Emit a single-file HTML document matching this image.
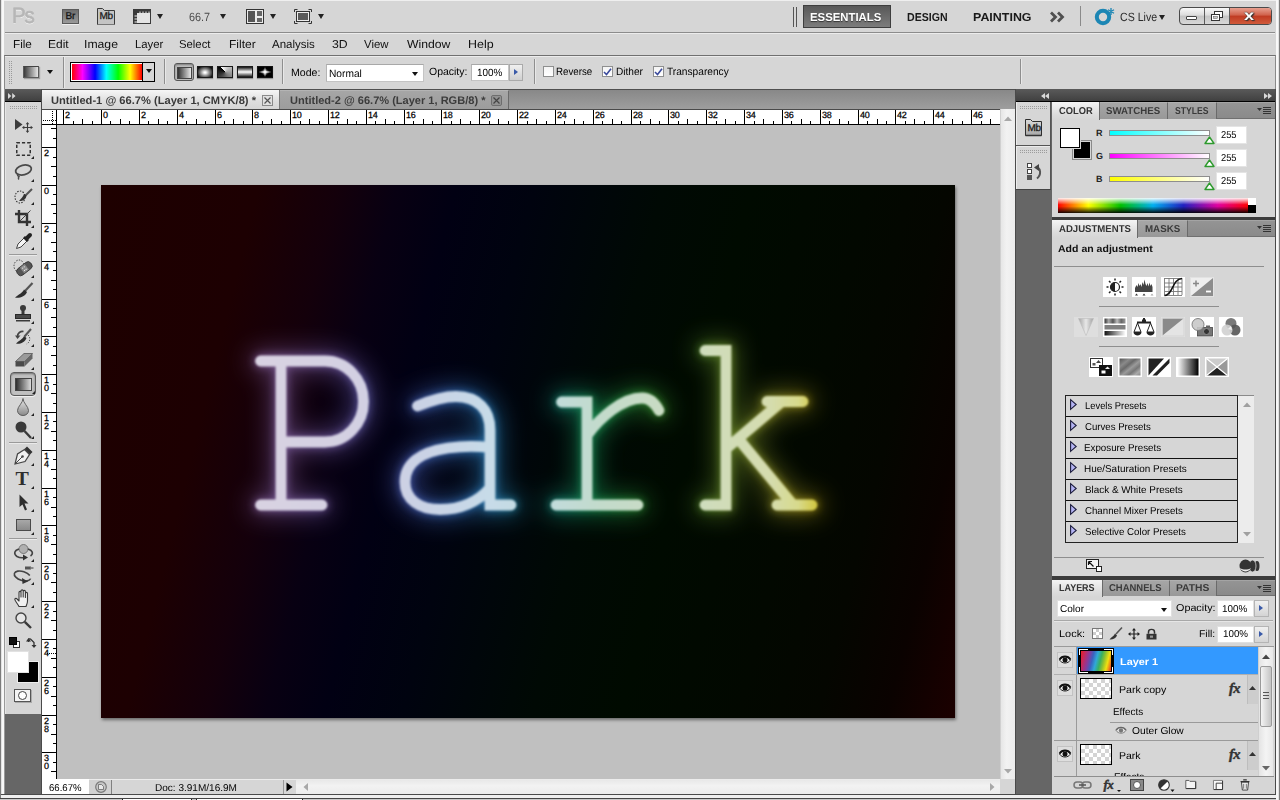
<!DOCTYPE html>
<html>
<head>
<meta charset="utf-8">
<title>Ps</title>
<style>
*{box-sizing:border-box;margin:0;padding:0}
html,body{width:1280px;height:800px;overflow:hidden;background:#d6d6d6;font-family:"Liberation Sans",sans-serif;font-size:11px;color:#000;text-rendering:geometricPrecision}
.a{position:absolute}
.t{position:absolute;white-space:nowrap;line-height:1;transform-origin:0 0}
svg{position:absolute;overflow:visible}
.menu{font-size:11.5px;top:40px;color:#111}
.ws{font-size:11.5px;font-weight:bold;top:13px;color:#1a1a1a}
.lbl{font-size:10px;color:#000}
.lb2{font-size:10.5px}
.inp{background:#fff;border:1px solid #c4c4c4;border-top-color:#a8a8a8;border-left-color:#b4b4b4}
.dd{width:0;height:0;border-left:3.5px solid transparent;border-right:3.5px solid transparent;border-top:5px solid #222}
.dds{width:0;height:0;border-left:3px solid transparent;border-right:3px solid transparent;border-top:4px solid #111}
.sep{width:1px;background:#8e8e8e;box-shadow:1px 0 0 #e8e8e8}
.cb{width:11px;height:11px;background:linear-gradient(#f4f4f4,#fff);border:1px solid #8e8f8f}
.tab{font-size:11px;font-weight:bold}
.ptab{font-size:10px;font-weight:bold;color:#3a3a3a}
.tri{width:0;height:0;border-left:3px solid transparent;border-bottom:3px solid #222}
.rl{font-size:9px;color:#000;letter-spacing:-0.2px;-webkit-text-stroke:0.25px #000}
.ck{width:32px;height:21px;border:1px solid #000;background-color:#fff;background-image:linear-gradient(45deg,#d4d4d4 25%,transparent 25%,transparent 75%,#d4d4d4 75%),linear-gradient(45deg,#d4d4d4 25%,transparent 25%,transparent 75%,#d4d4d4 75%);background-size:8px 8px;background-position:0 0,4px 4px}
.fx{font-family:"Liberation Serif",serif;font-style:italic;font-weight:bold;font-size:14.5px;color:#333;letter-spacing:-0.5px;text-shadow:0 1px 0 #f4f4f4;-webkit-text-stroke:0.5px #333}
.pl{}
</style>
</head>
<body>
<!-- APPBAR -->
<div class="a" style="left:0;top:0;width:1280px;height:1px;background:#efefef"></div>
<div class="a" style="left:5px;top:32px;width:1270px;height:1px;background:#8c8c8c"></div>
<div class="a" style="left:5px;top:33px;width:1270px;height:1px;background:#ececec"></div>
<div class="a" style="left:0;top:0;width:1px;height:800px;background:#7c7c7c"></div>
<div class="a" style="left:1px;top:0;width:1px;height:800px;background:#e2e2e2"></div>
<div class="a" style="left:2px;top:0;width:2px;height:800px;background:#f8f8f8"></div>
<!-- Ps logo -->
<div class="t" style="left:12px;top:5px;font-size:22px;color:#b6b6b6;letter-spacing:-1.2px;text-shadow:0 1px 0 #f6f6f6;-webkit-text-stroke:0.7px #b6b6b6;transform:scaleX(0.93)">Ps</div>
<!-- Br -->
<div class="a" style="left:62px;top:9px;width:17px;height:15px;background:linear-gradient(#6e6e6e,#9a9a9a);border:1px solid #5a5a5a;box-shadow:0 1px 0 #efefef"></div>
<div class="t" style="left:65.5px;top:12px;font-size:10px;color:#161616;letter-spacing:-0.2px;-webkit-text-stroke:0.3px #161616">Br</div>
<!-- Mb -->
<svg style="left:97px;top:8px" width="19" height="17" viewBox="0 0 19 17"><path d="M0.5 16.5V0.5H5.5L7.5 2.5H17.5V16.5Z" fill="#c4c4c4" stroke="#3a3a3a"/><path d="M0.5 16.5H17.5" stroke="#777"/></svg>
<div class="t" style="left:99.5px;top:12px;font-size:10px;color:#1a1a1a;letter-spacing:-0.3px;-webkit-text-stroke:0.3px #1a1a1a">Mb</div>
<!-- extras -->
<svg style="left:133px;top:9px" width="18" height="15" viewBox="0 0 18 15"><rect x="0.5" y="0.5" width="17" height="14" fill="#e4e4e4" stroke="#3a3a3a"/><rect x="0" y="0" width="18" height="4" fill="#3a3a3a"/><rect x="0" y="0" width="4" height="15" fill="#3a3a3a"/><path d="M7 2.5V4M10 2.5V4M13 2.5V4M16 2.5V4M1.5 7H4M1.5 10H4M1.5 13H4" stroke="#eee" stroke-width="1"/></svg>
<div class="a dd" style="left:157px;top:14px"></div>
<div class="t" style="left:189.42px;top:11px;font-size:12px;color:#4a4a4a;transform:scaleX(0.9050)">66.7</div>
<div class="a dd" style="left:220px;top:14px"></div>
<!-- arrange -->
<svg style="left:246px;top:9px" width="18" height="15" viewBox="0 0 18 15"><rect x="0.5" y="0.5" width="17" height="14" fill="#ececec" stroke="#333"/><rect x="2" y="2" width="7" height="11" fill="#555"/><rect x="11" y="2" width="5" height="5" fill="#666"/><rect x="11" y="9" width="5" height="4" fill="#666"/></svg>
<div class="a dd" style="left:270px;top:14px"></div>
<!-- screen mode -->
<svg style="left:294px;top:9px" width="18" height="15" viewBox="0 0 18 15"><path d="M0.5 3V0.5H3.5M14.5 0.5H17.5V3M17.5 12V14.5H14.5M3.5 14.5H0.5V12" fill="none" stroke="#333"/><rect x="2.5" y="2.5" width="13" height="10" fill="#ececec" stroke="#333"/><rect x="4" y="4" width="10" height="7" fill="#5a5a5a"/></svg>
<div class="a dd" style="left:318px;top:14px"></div>

<!-- workspace switcher -->
<div class="a" style="left:793px;top:7px;width:1px;height:20px;background:#555"></div>
<div class="a" style="left:796px;top:7px;width:1px;height:20px;background:#555"></div>
<div class="a" style="left:803px;top:5px;width:88px;height:23px;background:linear-gradient(#585858,#7c7c7c);border:1px solid #3e3e3e"></div>
<div class="t ws" style="left:809.69px;color:#fff;text-shadow:0 1px 1px #333;transform:scaleX(0.9864)">ESSENTIALS</div>
<div class="t ws" style="left:907.35px;transform:scaleX(0.9188)">DESIGN</div>
<div class="t ws" style="left:972.65px;transform:scaleX(1.0824)">PAINTING</div>
<svg style="left:1050px;top:12px" width="15" height="10" viewBox="0 0 15 10"><path d="M1 0.5L5.5 5L1 9.5M8 0.5L12.5 5L8 9.5" fill="none" stroke="#505050" stroke-width="2.800"/></svg>
<div class="a" style="left:1080px;top:6px;width:1px;height:20px;background:#8a8a8a"></div>
<!-- CS Live -->
<svg style="left:1094px;top:7px" width="22" height="19" viewBox="0 0 22 19"><circle cx="9" cy="10" r="6.2" fill="none" stroke="#1c86b4" stroke-width="4"/><path d="M17 1V8M14 2.8L20 6.2M20 2.8L14 6.2" stroke="#1c86b4" stroke-width="1.3"/></svg>
<div class="t" style="left:1119.90px;top:11px;font-size:12px;color:#2a2a2a;transform:scaleX(0.8818)">CS Live</div>
<div class="a dd" style="left:1159px;top:15px"></div>
<!-- window buttons -->
<div class="a" style="left:1179px;top:7px;width:93px;height:18px;border:1px solid #4a4a4a;border-radius:4px;background:linear-gradient(#f8f8f8,#dcdcdc 45%,#c4c4c4 50%,#d8d8d8);overflow:hidden">
 <div class="a" style="left:24px;top:0;width:1px;height:16px;background:#5a5a5a"></div>
 <div class="a" style="left:49px;top:0;width:1px;height:16px;background:#5a5a5a"></div>
 <div class="a" style="left:50px;top:0;width:42px;height:16px;background:linear-gradient(#e8a090,#d0604a 45%,#c03a22 50%,#d05a3a)"></div>
</div>
<div class="a" style="left:1186px;top:16px;width:11px;height:4px;background:#fff;border:1px solid #444;border-radius:1px"></div>
<svg style="left:1210px;top:10px" width="14" height="12" viewBox="0 0 14 12"><rect x="4.5" y="1.5" width="8" height="6" fill="#fff" stroke="#333"/><rect x="1.5" y="4.5" width="8" height="6" fill="#fff" stroke="#333"/><rect x="3.5" y="6.5" width="4" height="2" fill="#ccc" stroke="#555" stroke-width="0.5"/></svg>
<div class="t" style="left:1244px;top:8px;font-size:14px;font-weight:bold;color:#fff;text-shadow:0 0 1px #333,0 0 1px #333,1px 1px 1px #333;transform:scaleX(1.3)">x</div>

<!-- MENUS -->
<div class="t menu" style="left:13.00px;transform:scaleX(1.0194)">File</div>
<div class="t menu" style="left:47.50px;transform:scaleX(1.0409)">Edit</div>
<div class="t menu" style="left:83.50px;transform:scaleX(1.0611)">Image</div>
<div class="t menu" style="left:134.50px;transform:scaleX(0.9863)">Layer</div>
<div class="t menu" style="left:179.00px;transform:scaleX(0.9835)">Select</div>
<div class="t menu" style="left:228.50px;transform:scaleX(1.0470)">Filter</div>
<div class="t menu" style="left:272.00px;transform:scaleX(1.0008)">Analysis</div>
<div class="t menu" style="left:332.06px;transform:scaleX(1.0656)">3D</div>
<div class="t menu" style="left:363.81px;transform:scaleX(0.9909)">View</div>
<div class="t menu" style="left:406.89px;transform:scaleX(1.0602)">Window</div>
<div class="t menu" style="left:468.00px;transform:scaleX(1.0818)">Help</div>

<!-- OPTIONS BAR -->
<div class="a" style="left:4px;top:55px;width:1272px;height:34px;background:#d6d6d6;border-top:1px solid #707070;border-left:1px solid #8a8a8a;border-right:1px solid #8a8a8a"></div>
<div class="a" style="left:5px;top:56px;width:1270px;height:1px;background:#ececec"></div>
<!-- gripper -->
<div class="a" style="left:9px;top:61px;width:3px;height:24px;background-image:radial-gradient(circle at 0.5px 0.5px,#9a9a9a 0.6px,transparent 0.7px);background-size:2px 2px"></div>
<!-- gradient tool preset -->
<div class="a" style="left:23px;top:66px;width:16px;height:12px;background:linear-gradient(90deg,#3a3a3a,#e4e4e4);border:1px solid #5a5a5a;border-top-color:#444;box-shadow:1px 1px 1px rgba(0,0,0,.25)"></div>
<div class="a dds" style="left:47px;top:70px"></div>
<div class="a" style="left:63px;top:57px;width:1px;height:31px;background:#8e8e8e;box-shadow:1px 0 0 #e8e8e8"></div>
<!-- gradient picker -->
<div class="a" style="left:70px;top:62px;width:85px;height:20px;border:1px solid #000;background:#d6d6d6"></div>
<div class="a" style="left:71px;top:63px;width:72px;height:18px;background:#fff;border-right:1px solid #000"></div><div class="a" style="left:72px;top:64px;width:70px;height:16px;background:linear-gradient(90deg,#ff0000 0%,#ff00ff 15%,#0000ff 33%,#00ffff 49%,#00ff00 66%,#ffff00 83%,#ff0000 100%)"></div>
<div class="a dds" style="left:146px;top:69px"></div>
<div class="a sep" style="left:164px;top:59px;height:25px"></div>
<!-- gradient type buttons -->
<div class="a" style="left:174px;top:63px;width:20px;height:18px;border:1px solid #555;border-radius:3px;background:#bdbdbd;box-shadow:inset 0 1px 2px rgba(0,0,0,.35)"></div>
<div class="a" style="left:177px;top:67px;width:15px;height:12px;background:linear-gradient(90deg,#333,#e8e8e8);border:1px solid #444"></div>
<div class="a" style="left:197px;top:66px;width:16px;height:12px;background:radial-gradient(ellipse at 50% 55%,#fff 8%,#888 45%,#111 85%);border:1px solid #1a1a1a;box-shadow:0 1px 1px rgba(0,0,0,.3)"></div>
<div class="a" style="left:216.500px;top:66px;width:16px;height:12px;background:conic-gradient(from 315deg,#fff,#000);border:1px solid #1a1a1a;box-shadow:0 1px 1px rgba(0,0,0,.3)"></div>
<div class="a" style="left:237px;top:66px;width:16px;height:12px;background:linear-gradient(#111,#fff 50%,#111);border:1px solid #1a1a1a;box-shadow:0 1px 1px rgba(0,0,0,.3)"></div>
<div class="a" style="left:257px;top:66px;width:16px;height:12px;background:radial-gradient(ellipse 50% 14% at 50% 50%,#fff 10%,rgba(255,255,255,0) 100%),radial-gradient(ellipse 14% 50% at 50% 50%,#fff 10%,rgba(255,255,255,0) 100%),radial-gradient(ellipse at center,#aaa 0%,#000 45%);border:1px solid #111;box-shadow:0 1px 1px rgba(0,0,0,.3)"></div>
<div class="a sep" style="left:282px;top:59px;height:25px"></div>
<div class="t lbl lb2" style="left:291.41px;top:68.3px;transform:scaleX(1.0071)">Mode:</div>
<div class="a inp" style="left:326px;top:64px;width:98px;height:18px"></div>
<div class="t lbl lb2" style="left:328.55px;top:69px;transform:scaleX(0.9699)">Normal</div>
<div class="a dds" style="left:412px;top:72px"></div>
<div class="t lbl lb2" style="left:429.36px;top:67.3px;transform:scaleX(0.9980)">Opacity:</div>
<div class="a inp" style="left:471px;top:64px;width:38px;height:17px"></div>
<div class="t lbl lb2" style="left:476.72px;top:68px;transform:scaleX(0.9421)">100%</div>
<div class="a" style="left:509px;top:64px;width:14px;height:17px;border:1px solid #aaa;background:linear-gradient(#f0f0f0,#d0d0d0)"></div>
<div class="a" style="left:514px;top:69px;width:0;height:0;border-top:3.5px solid transparent;border-bottom:3.5px solid transparent;border-left:4px solid #3a5aa8"></div>
<div class="a sep" style="left:534px;top:59px;height:25px"></div>
<div class="a cb" style="left:543px;top:66px"></div>
<div class="t lbl lb2" style="left:556.00px;top:67.2px;transform:scaleX(0.9276)">Reverse</div>
<div class="a cb" style="left:602px;top:66px"></div>
<svg style="left:603px;top:68px" width="9" height="8" viewBox="0 0 9 8"><path d="M1 4L3.500 6.500L8 0.800" fill="none" stroke="#3a4a9c" stroke-width="1.600"/></svg>
<div class="t lbl lb2" style="left:615.50px;top:67.2px;transform:scaleX(0.9625)">Dither</div>
<div class="a cb" style="left:653px;top:66px"></div>
<svg style="left:654px;top:68px" width="9" height="8" viewBox="0 0 9 8"><path d="M1 4L3.500 6.500L8 0.800" fill="none" stroke="#3a4a9c" stroke-width="1.600"/></svg>
<div class="t lbl lb2" style="left:666.68px;top:67.2px;transform:scaleX(0.9678)">Transparency</div>
<div class="a sep" style="left:1020px;top:59px;height:25px"></div>
<!-- TOOLBOX -->
<div class="a" style="left:5px;top:89px;width:36px;height:13px;background:linear-gradient(#5a5a5a,#404040);border-bottom:1px solid #000"></div>
<svg style="left:8px;top:93px" width="7.500" height="6" viewBox="0 0 9 6" preserveAspectRatio="none"><path d="M0 0L4 3L0 6ZM5 0L9 3L5 6Z" fill="#d8d8d8"/></svg>
<div class="a" style="left:5px;top:102px;width:36px;height:612px;background:#d6d6d6;border-left:1px solid #e6e6e6"></div>
<div class="a" style="left:4px;top:89px;width:1px;height:705px;background:#9a9a9a"></div>
<div class="a" style="left:41px;top:89px;width:1px;height:705px;background:#4a4a4a"></div>
<div class="a" style="left:5px;top:714px;width:36px;height:80px;background:#666"></div>
<div class="a" style="left:10px;top:106px;width:28px;height:3px;background-image:radial-gradient(circle at 0.5px 0.5px,#9c9c9c 0.6px,transparent 0.7px);background-size:2px 2px"></div>
<div class="a" style="left:9px;top:254px;width:28px;height:1px;background:#9a9a9a;box-shadow:0 1px 0 #eaeaea"></div>
<div class="a" style="left:9px;top:442px;width:28px;height:1px;background:#9a9a9a;box-shadow:0 1px 0 #eaeaea"></div>
<div class="a" style="left:9px;top:538px;width:28px;height:1px;background:#9a9a9a;box-shadow:0 1px 0 #eaeaea"></div>
<!-- sub-tool triangles -->
<div class="a tri" style="left:31px;top:156px"></div>
<div class="a tri" style="left:31px;top:179px"></div>
<div class="a tri" style="left:31px;top:202px"></div>
<div class="a tri" style="left:31px;top:225px"></div>
<div class="a tri" style="left:31px;top:247px"></div>
<div class="a tri" style="left:31px;top:275px"></div>
<div class="a tri" style="left:31px;top:298px"></div>
<div class="a tri" style="left:31px;top:321px"></div>
<div class="a tri" style="left:31px;top:344px"></div>
<div class="a tri" style="left:31px;top:367px"></div>
<div class="a tri" style="left:31px;top:413px"></div>
<div class="a tri" style="left:31px;top:436px"></div>
<div class="a tri" style="left:31px;top:463px"></div>
<div class="a tri" style="left:31px;top:486px"></div>
<div class="a tri" style="left:31px;top:509px"></div>
<div class="a tri" style="left:31px;top:532px"></div>
<div class="a tri" style="left:31px;top:559px"></div>
<div class="a tri" style="left:31px;top:582px"></div>
<div class="a tri" style="left:31px;top:605px"></div>
<!-- move -->
<svg style="left:15px;top:119px" width="18" height="14" viewBox="0 0 18 14"><path d="M0 0V11L7.5 5.5Z" fill="#3c3c3c"/><path d="M12.500 4.500V12.500M8.500 8.500H16.500" stroke="#3c3c3c" stroke-width="1.100"/><path d="M12.500 3L14.300 5.300H10.700ZM12.500 14L14.300 11.700H10.700ZM7 8.500L9.300 6.700V10.300ZM18 8.500L15.700 6.700V10.300Z" fill="#3c3c3c"/></svg>
<!-- marquee -->
<svg style="left:16px;top:142px" width="15" height="14" viewBox="0 0 15 14"><rect x="0.75" y="0.75" width="13.500" height="12.500" fill="none" stroke="#333" stroke-width="1.5" stroke-dasharray="3.2 2"/></svg>
<!-- lasso -->
<svg style="left:14px;top:164px" width="18" height="16" viewBox="0 0 18 16"><ellipse cx="9.5" cy="6" rx="8" ry="4.800" transform="rotate(-14 9.500 6)" fill="none" stroke="#4a4a4a" stroke-width="1.8"/><path d="M4 9.500C2.500 11 4 12.500 5.500 12C4.500 13 4 14.500 5 15.500" fill="none" stroke="#4a4a4a" stroke-width="1.300"/></svg>
<!-- quick select -->
<svg style="left:14px;top:188px" width="19" height="16" viewBox="0 0 19 16"><ellipse cx="6" cy="9" rx="5" ry="6" fill="none" stroke="#333" stroke-width="1.100" stroke-dasharray="1.500 1.300"/><path d="M18 1L11 8" stroke="#555" stroke-width="2"/><path d="M5 13C8 13.500 12 11.500 12.500 7.500L10 6C9 9 7 10.500 5 13Z" fill="#333"/></svg>
<!-- crop -->
<svg style="left:15px;top:210px" width="16" height="16" viewBox="0 0 16 16"><path d="M4 0V12H16M0 4H12V16" fill="none" stroke="#333" stroke-width="2.400"/><path d="M15.500 0.500L5 11" stroke="#444" stroke-width="1"/></svg>
<!-- eyedropper -->
<svg style="left:16px;top:233px" width="16" height="16" viewBox="0 0 16 16"><path d="M0.500 15.500L2 11L8.500 4.500L11.500 7.500L5 14Z" fill="#f4f4f4" stroke="#444" stroke-width="1"/><path d="M8 4L12 8" stroke="#222" stroke-width="2.600"/><path d="M10.500 5.500L14 2" stroke="#222" stroke-width="4" stroke-linecap="round"/></svg>
<!-- healing brush -->
<svg style="left:13px;top:259px" width="20" height="18" viewBox="0 0 20 18"><ellipse cx="6" cy="7" rx="5" ry="6" fill="none" stroke="#444" stroke-width="1" stroke-dasharray="1.400 1.400"/><g transform="rotate(-38 11 10)"><rect x="3" y="6" width="17" height="8" rx="3.500" fill="#555" stroke="#333" stroke-width="0.800"/><rect x="8.500" y="6.500" width="6" height="7" fill="#8a8a8a"/><circle cx="10.500" cy="8.500" r="0.600" fill="#eee"/><circle cx="12.500" cy="8.500" r="0.600" fill="#eee"/><circle cx="10.500" cy="11.500" r="0.600" fill="#eee"/><circle cx="12.500" cy="11.500" r="0.600" fill="#eee"/></g></svg>
<!-- brush -->
<svg style="left:15px;top:282px" width="18" height="17" viewBox="0 0 18 17"><path d="M17.500 1L10 9" stroke="#555" stroke-width="2.200"/><path d="M0 15.500C4 16.500 10.500 14.500 12 10L9 7.500C7.500 11 3.500 12.500 0 15.500Z" fill="#2e2e2e"/></svg>
<!-- stamp -->
<svg style="left:15px;top:305px" width="16" height="17" viewBox="0 0 16 17"><circle cx="8" cy="3" r="3" fill="#3a3a3a"/><path d="M6.500 5H9.500V10H6.500Z" fill="#3a3a3a"/><rect x="0.500" y="9.500" width="15" height="4" fill="#4a4a4a" stroke="#2a2a2a"/><rect x="1" y="15" width="14" height="1.500" fill="#3a3a3a"/></svg>
<!-- history brush -->
<svg style="left:15px;top:328px" width="18" height="18" viewBox="0 0 18 18"><path d="M16 1L9.500 8.500" stroke="#555" stroke-width="2"/><path d="M1 15.500C4.500 16.500 10 14.500 11.500 10L9 8C7.500 11.500 4 12.500 1 15.500Z" fill="#2e2e2e"/><path d="M2.500 8.500C2.500 5 5.500 3 8.500 3.500" fill="none" stroke="#444" stroke-width="1.600"/><path d="M0 7.500H5.500L2.500 11Z" fill="#444"/><path d="M13 7C16 9.500 15 14.500 11.500 16" fill="none" stroke="#555" stroke-width="1" stroke-dasharray="1.300 1.300"/></svg>
<!-- eraser -->
<svg style="left:15px;top:352px" width="18" height="15" viewBox="0 0 18 15"><path d="M0.500 9.500L9 1.500H17.500L9.500 9.500Z" fill="#9a9a9a" stroke="#555" stroke-width="0.800"/><path d="M0.500 9.500H9.500V14.500H0.500Z" fill="#4a4a4a"/><path d="M9.500 9.500L17.500 1.500V6.500L9.500 14.500Z" fill="#666"/></svg>
<!-- gradient selected -->
<div class="a" style="left:10px;top:372px;width:26px;height:24px;border:1px solid #5a5a5a;border-radius:4px;background:#c0c0c0;box-shadow:inset 0 1px 2px rgba(0,0,0,.4),0 1px 0 #f0f0f0"></div>
<div class="a" style="left:15px;top:378px;width:17px;height:13px;background:linear-gradient(90deg,#2e2e2e,#dcdcdc);border:1px solid #444"></div>
<div class="a tri" style="left:32px;top:391px"></div>
<!-- blur -->
<svg style="left:17px;top:398px" width="12" height="18" viewBox="0 0 12 18"><defs><linearGradient id="gbl" x1="0" y1="0" x2="0" y2="1"><stop offset="0" stop-color="#e8e8e8"/><stop offset="1" stop-color="#8a8a8a"/></linearGradient></defs><path d="M6 0.500C6 5 0.500 8.500 0.500 12.500C0.500 15.500 3 17.500 6 17.500C9 17.500 11.500 15.500 11.500 12.500C11.500 8.500 6 5 6 0.500Z" fill="url(#gbl)" stroke="#555" stroke-width="0.900"/></svg>
<!-- dodge -->
<svg style="left:15px;top:421px" width="17" height="18" viewBox="0 0 17 18"><circle cx="6" cy="6" r="5.500" fill="#3a3a3a"/><path d="M9.500 10L16 17" stroke="#3a3a3a" stroke-width="2.400"/></svg>
<!-- pen -->
<svg style="left:14px;top:446px" width="19" height="19" viewBox="0 0 19 19"><path d="M1 18L3.500 8L10.500 3.500L15.500 8.500L11 15.500Z" fill="#f0f0f0" stroke="#444" stroke-width="1.200"/><path d="M1 18L8 11" stroke="#444" stroke-width="1"/><circle cx="8.500" cy="10.500" r="1.300" fill="#444"/><path d="M10.500 3L13 0.500L18.500 6L16 8.500Z" fill="#333"/></svg>
<!-- type -->
<div class="t" style="left:15.5px;top:468.5px;font-family:'Liberation Serif',serif;font-size:20px;font-weight:bold;color:#2e2e2e">T</div>
<!-- path select -->
<svg style="left:19px;top:494px" width="10" height="17" viewBox="0 0 10 17"><path d="M0.500 0.500V13L3.500 10.500L6 16.500L8 15.500L5.500 9.500H9.500Z" fill="#2e2e2e"/></svg>
<!-- rectangle -->
<div class="a" style="left:16px;top:519px;width:15px;height:12px;background:linear-gradient(#a8a8a8,#8a8a8a);border:1px solid #4a4a4a"></div>
<!-- 3d rotate -->
<svg style="left:13px;top:544px" width="21" height="17" viewBox="0 0 21 17"><circle cx="10.500" cy="5" r="4.500" fill="#b0b0b0" stroke="#666" stroke-width="0.800"/><path d="M6 5C1 6.500 0.500 10 4 12.500C6.500 14 9.500 14 12 13.500" fill="none" stroke="#444" stroke-width="1.600"/><path d="M15 5C20 6.500 20.500 10 17.500 12" fill="none" stroke="#444" stroke-width="1.600"/><path d="M10 10.500L15 13.500L10 16.500Z" fill="#333"/></svg>
<!-- 3d orbit -->
<svg style="left:13px;top:566px" width="21" height="18" viewBox="0 0 21 18"><rect x="12" y="0.500" width="6" height="3" fill="#555"/><rect x="17.500" y="1" width="3" height="2" fill="#888"/><ellipse cx="9.500" cy="10" rx="8.500" ry="4.500" transform="rotate(18 9.500 10)" fill="none" stroke="#444" stroke-width="1.600" stroke-dasharray="38 12"/><path d="M9 12L15 15.500L9.500 18Z" fill="#333"/></svg>
<!-- hand -->
<svg style="left:14px;top:589px" width="18" height="18" viewBox="0 0 18 18"><path d="M5 17.500C3.500 14.500 1 12 0.800 10.500C0.800 9 2.500 9 3.500 10.500L5 12V3.500C5 2 7 2 7 3.500V8V2C7 0.500 9.200 0.500 9.200 2V8V2.500C9.200 1 11.400 1 11.400 2.500V8.500V4.500C11.400 3 13.500 3 13.500 4.500V12C13.500 14.500 12.500 16 12 17.500Z" fill="#f0f0f0" stroke="#3a3a3a" stroke-width="1.100" stroke-linejoin="round"/></svg>
<!-- zoom -->
<svg style="left:15px;top:612px" width="17" height="17" viewBox="0 0 17 17"><circle cx="6" cy="6" r="5" fill="#e6e6e6" stroke="#444" stroke-width="1.400"/><path d="M9.800 9.800L16 16" stroke="#3a3a3a" stroke-width="2.400"/></svg>
<!-- default colors / swap -->
<div class="a" style="left:13px;top:641px;width:7px;height:7px;background:#fff;border:1px solid #333"></div>
<div class="a" style="left:9px;top:637px;width:8px;height:8px;background:#111;border:1px solid #000"></div>
<svg style="left:26px;top:637px" width="11" height="11" viewBox="0 0 11 11"><path d="M2.500 5V3C2.500 2 3.500 1.500 4.500 2L8 5.500V8.500" fill="none" stroke="#333" stroke-width="1.300"/><path d="M0 4.500H5L2.500 1Z" fill="#333"/><path d="M5.500 8H10.500L8 11Z" fill="#333"/></svg>
<!-- fg/bg -->
<div class="a" style="left:17px;top:661px;width:22px;height:22px;background:#000;border:1px solid #eee;outline:0"></div>
<div class="a" style="left:7px;top:651px;width:22px;height:22px;background:#fff;border:1px solid #e2e2e2"></div>
<!-- quick mask -->
<div class="a" style="left:14px;top:689px;width:17px;height:13px;background:#f4f4f4;border:1px solid #555;box-shadow:1px 1px 0 #aaa"></div>
<div class="a" style="left:18px;top:691px;width:9px;height:9px;border:1px solid #444;border-radius:50%;background:#fff"></div>
<!-- DOCUMENT -->
<div class="a" style="left:42px;top:89px;width:973px;height:20px;background:linear-gradient(#888888,#9e9e9e);border-top:1px solid #505050"></div>
<div class="a" style="left:42px;top:90px;width:238px;height:19px;background:linear-gradient(#f6f6f6,#dedede 60%,#d6d6d6);border-right:1px solid #7a7a7a"></div>
<div class="t tab" style="left:50.75px;top:95.8px;color:#3a3a3a;transform:scaleX(1.0113)" id="tab1">Untitled-1 @ 66.7% (Layer 1, CMYK/8) *</div>
<div class="a" style="left:262px;top:95px;width:11px;height:11px;border:1px solid #8a8a8a;background:#e0e0e0"></div>
<svg style="left:264px;top:97px" width="7" height="7" viewBox="0 0 7 7"><path d="M0.500 0.500L6.500 6.500M6.500 0.500L0.500 6.500" stroke="#555" stroke-width="1.200"/></svg>
<div class="a" style="left:280px;top:90px;width:229px;height:19px;background:linear-gradient(#a6a6a6,#9c9c9c);border-right:1px solid #6a6a6a;border-top:1px solid #b4b4b4"></div>
<div class="t tab" style="left:289.51px;top:95.8px;color:#3c3c3c;transform:scaleX(1.0036)" id="tab2">Untitled-2 @ 66.7% (Layer 1, RGB/8) *</div>
<div class="a" style="left:491px;top:95px;width:11px;height:11px;border:1px solid #6e6e6e;border-radius:2px;background:#929292"></div>
<svg style="left:493px;top:97px" width="7" height="7" viewBox="0 0 7 7"><path d="M0.500 0.500L6.500 6.500M6.500 0.500L0.500 6.500" stroke="#444" stroke-width="1.200"/></svg>
<div class="a" style="left:42px;top:109px;width:958px;height:1px;background:#4a4a4a"></div>
<div class="a" style="left:42px;top:110px;width:958px;height:14px;background:#fff"></div>
<div class="a" style="left:42px;top:124px;width:958px;height:1px;background:#000"></div>
<div class="a" style="left:42px;top:125px;width:14px;height:654px;background:#fff"></div>
<div class="a" style="left:56px;top:110px;width:1px;height:669px;background:#000"></div>
<div class="a" style="left:57px;top:125px;width:943px;height:654px;background:#c0c0c0"></div>
<svg style="left:0;top:0" width="1280" height="800" viewBox="0 0 1280 800" shape-rendering="crispEdges"><rect x="63" y="110" width="1" height="14" fill="#000"/><rect x="73" y="121" width="1" height="3" fill="#000"/><rect x="82" y="119" width="1" height="5" fill="#000"/><rect x="92" y="121" width="1" height="3" fill="#000"/><rect x="101" y="110" width="1" height="14" fill="#000"/><rect x="110" y="121" width="1" height="3" fill="#000"/><rect x="120" y="119" width="1" height="5" fill="#000"/><rect x="129" y="121" width="1" height="3" fill="#000"/><rect x="139" y="110" width="1" height="14" fill="#000"/><rect x="148" y="121" width="1" height="3" fill="#000"/><rect x="158" y="119" width="1" height="5" fill="#000"/><rect x="167" y="121" width="1" height="3" fill="#000"/><rect x="177" y="110" width="1" height="14" fill="#000"/><rect x="186" y="121" width="1" height="3" fill="#000"/><rect x="196" y="119" width="1" height="5" fill="#000"/><rect x="205" y="121" width="1" height="3" fill="#000"/><rect x="215" y="110" width="1" height="14" fill="#000"/><rect x="224" y="121" width="1" height="3" fill="#000"/><rect x="233" y="119" width="1" height="5" fill="#000"/><rect x="243" y="121" width="1" height="3" fill="#000"/><rect x="252" y="110" width="1" height="14" fill="#000"/><rect x="262" y="121" width="1" height="3" fill="#000"/><rect x="271" y="119" width="1" height="5" fill="#000"/><rect x="281" y="121" width="1" height="3" fill="#000"/><rect x="290" y="110" width="1" height="14" fill="#000"/><rect x="300" y="121" width="1" height="3" fill="#000"/><rect x="309" y="119" width="1" height="5" fill="#000"/><rect x="319" y="121" width="1" height="3" fill="#000"/><rect x="328" y="110" width="1" height="14" fill="#000"/><rect x="337" y="121" width="1" height="3" fill="#000"/><rect x="347" y="119" width="1" height="5" fill="#000"/><rect x="356" y="121" width="1" height="3" fill="#000"/><rect x="366" y="110" width="1" height="14" fill="#000"/><rect x="375" y="121" width="1" height="3" fill="#000"/><rect x="385" y="119" width="1" height="5" fill="#000"/><rect x="394" y="121" width="1" height="3" fill="#000"/><rect x="404" y="110" width="1" height="14" fill="#000"/><rect x="413" y="121" width="1" height="3" fill="#000"/><rect x="423" y="119" width="1" height="5" fill="#000"/><rect x="432" y="121" width="1" height="3" fill="#000"/><rect x="441" y="110" width="1" height="14" fill="#000"/><rect x="451" y="121" width="1" height="3" fill="#000"/><rect x="460" y="119" width="1" height="5" fill="#000"/><rect x="470" y="121" width="1" height="3" fill="#000"/><rect x="479" y="110" width="1" height="14" fill="#000"/><rect x="489" y="121" width="1" height="3" fill="#000"/><rect x="498" y="119" width="1" height="5" fill="#000"/><rect x="508" y="121" width="1" height="3" fill="#000"/><rect x="517" y="110" width="1" height="14" fill="#000"/><rect x="527" y="121" width="1" height="3" fill="#000"/><rect x="536" y="119" width="1" height="5" fill="#000"/><rect x="546" y="121" width="1" height="3" fill="#000"/><rect x="555" y="110" width="1" height="14" fill="#000"/><rect x="564" y="121" width="1" height="3" fill="#000"/><rect x="574" y="119" width="1" height="5" fill="#000"/><rect x="583" y="121" width="1" height="3" fill="#000"/><rect x="593" y="110" width="1" height="14" fill="#000"/><rect x="602" y="121" width="1" height="3" fill="#000"/><rect x="612" y="119" width="1" height="5" fill="#000"/><rect x="621" y="121" width="1" height="3" fill="#000"/><rect x="631" y="110" width="1" height="14" fill="#000"/><rect x="640" y="121" width="1" height="3" fill="#000"/><rect x="650" y="119" width="1" height="5" fill="#000"/><rect x="659" y="121" width="1" height="3" fill="#000"/><rect x="668" y="110" width="1" height="14" fill="#000"/><rect x="678" y="121" width="1" height="3" fill="#000"/><rect x="687" y="119" width="1" height="5" fill="#000"/><rect x="697" y="121" width="1" height="3" fill="#000"/><rect x="706" y="110" width="1" height="14" fill="#000"/><rect x="716" y="121" width="1" height="3" fill="#000"/><rect x="725" y="119" width="1" height="5" fill="#000"/><rect x="735" y="121" width="1" height="3" fill="#000"/><rect x="744" y="110" width="1" height="14" fill="#000"/><rect x="754" y="121" width="1" height="3" fill="#000"/><rect x="763" y="119" width="1" height="5" fill="#000"/><rect x="773" y="121" width="1" height="3" fill="#000"/><rect x="782" y="110" width="1" height="14" fill="#000"/><rect x="791" y="121" width="1" height="3" fill="#000"/><rect x="801" y="119" width="1" height="5" fill="#000"/><rect x="810" y="121" width="1" height="3" fill="#000"/><rect x="820" y="110" width="1" height="14" fill="#000"/><rect x="829" y="121" width="1" height="3" fill="#000"/><rect x="839" y="119" width="1" height="5" fill="#000"/><rect x="848" y="121" width="1" height="3" fill="#000"/><rect x="858" y="110" width="1" height="14" fill="#000"/><rect x="867" y="121" width="1" height="3" fill="#000"/><rect x="877" y="119" width="1" height="5" fill="#000"/><rect x="886" y="121" width="1" height="3" fill="#000"/><rect x="895" y="110" width="1" height="14" fill="#000"/><rect x="905" y="121" width="1" height="3" fill="#000"/><rect x="914" y="119" width="1" height="5" fill="#000"/><rect x="924" y="121" width="1" height="3" fill="#000"/><rect x="933" y="110" width="1" height="14" fill="#000"/><rect x="943" y="121" width="1" height="3" fill="#000"/><rect x="952" y="119" width="1" height="5" fill="#000"/><rect x="962" y="121" width="1" height="3" fill="#000"/><rect x="971" y="110" width="1" height="14" fill="#000"/><rect x="981" y="121" width="1" height="3" fill="#000"/><rect x="990" y="119" width="1" height="5" fill="#000"/><rect x="51" y="128" width="5" height="1" fill="#000"/><rect x="53" y="138" width="3" height="1" fill="#000"/><rect x="42" y="147" width="14" height="1" fill="#000"/><rect x="53" y="157" width="3" height="1" fill="#000"/><rect x="51" y="166" width="5" height="1" fill="#000"/><rect x="53" y="176" width="3" height="1" fill="#000"/><rect x="42" y="185" width="14" height="1" fill="#000"/><rect x="53" y="194" width="3" height="1" fill="#000"/><rect x="51" y="204" width="5" height="1" fill="#000"/><rect x="53" y="213" width="3" height="1" fill="#000"/><rect x="42" y="223" width="14" height="1" fill="#000"/><rect x="53" y="232" width="3" height="1" fill="#000"/><rect x="51" y="242" width="5" height="1" fill="#000"/><rect x="53" y="251" width="3" height="1" fill="#000"/><rect x="42" y="261" width="14" height="1" fill="#000"/><rect x="53" y="270" width="3" height="1" fill="#000"/><rect x="51" y="280" width="5" height="1" fill="#000"/><rect x="53" y="289" width="3" height="1" fill="#000"/><rect x="42" y="299" width="14" height="1" fill="#000"/><rect x="53" y="308" width="3" height="1" fill="#000"/><rect x="51" y="317" width="5" height="1" fill="#000"/><rect x="53" y="327" width="3" height="1" fill="#000"/><rect x="42" y="336" width="14" height="1" fill="#000"/><rect x="53" y="346" width="3" height="1" fill="#000"/><rect x="51" y="355" width="5" height="1" fill="#000"/><rect x="53" y="365" width="3" height="1" fill="#000"/><rect x="42" y="374" width="14" height="1" fill="#000"/><rect x="53" y="384" width="3" height="1" fill="#000"/><rect x="51" y="393" width="5" height="1" fill="#000"/><rect x="53" y="403" width="3" height="1" fill="#000"/><rect x="42" y="412" width="14" height="1" fill="#000"/><rect x="53" y="421" width="3" height="1" fill="#000"/><rect x="51" y="431" width="5" height="1" fill="#000"/><rect x="53" y="440" width="3" height="1" fill="#000"/><rect x="42" y="450" width="14" height="1" fill="#000"/><rect x="53" y="459" width="3" height="1" fill="#000"/><rect x="51" y="469" width="5" height="1" fill="#000"/><rect x="53" y="478" width="3" height="1" fill="#000"/><rect x="42" y="488" width="14" height="1" fill="#000"/><rect x="53" y="497" width="3" height="1" fill="#000"/><rect x="51" y="507" width="5" height="1" fill="#000"/><rect x="53" y="516" width="3" height="1" fill="#000"/><rect x="42" y="525" width="14" height="1" fill="#000"/><rect x="53" y="535" width="3" height="1" fill="#000"/><rect x="51" y="544" width="5" height="1" fill="#000"/><rect x="53" y="554" width="3" height="1" fill="#000"/><rect x="42" y="563" width="14" height="1" fill="#000"/><rect x="53" y="573" width="3" height="1" fill="#000"/><rect x="51" y="582" width="5" height="1" fill="#000"/><rect x="53" y="592" width="3" height="1" fill="#000"/><rect x="42" y="601" width="14" height="1" fill="#000"/><rect x="53" y="611" width="3" height="1" fill="#000"/><rect x="51" y="620" width="5" height="1" fill="#000"/><rect x="53" y="630" width="3" height="1" fill="#000"/><rect x="42" y="639" width="14" height="1" fill="#000"/><rect x="53" y="648" width="3" height="1" fill="#000"/><rect x="51" y="658" width="5" height="1" fill="#000"/><rect x="53" y="667" width="3" height="1" fill="#000"/><rect x="42" y="677" width="14" height="1" fill="#000"/><rect x="53" y="686" width="3" height="1" fill="#000"/><rect x="51" y="696" width="5" height="1" fill="#000"/><rect x="53" y="705" width="3" height="1" fill="#000"/><rect x="42" y="715" width="14" height="1" fill="#000"/><rect x="53" y="724" width="3" height="1" fill="#000"/><rect x="51" y="734" width="5" height="1" fill="#000"/><rect x="53" y="743" width="3" height="1" fill="#000"/><rect x="42" y="752" width="14" height="1" fill="#000"/><rect x="53" y="762" width="3" height="1" fill="#000"/><rect x="51" y="771" width="5" height="1" fill="#000"/><rect x="52" y="111" width="1" height="1" fill="#000"/><rect x="52" y="113" width="1" height="1" fill="#000"/><rect x="52" y="115" width="1" height="1" fill="#000"/><rect x="52" y="117" width="1" height="1" fill="#000"/><rect x="52" y="119" width="1" height="1" fill="#000"/><rect x="52" y="121" width="1" height="1" fill="#000"/><rect x="52" y="123" width="1" height="1" fill="#000"/><rect x="43" y="120" width="1" height="1" fill="#000"/><rect x="45" y="120" width="1" height="1" fill="#000"/><rect x="47" y="120" width="1" height="1" fill="#000"/><rect x="49" y="120" width="1" height="1" fill="#000"/><rect x="51" y="120" width="1" height="1" fill="#000"/><rect x="53" y="120" width="1" height="1" fill="#000"/><rect x="55" y="120" width="1" height="1" fill="#000"/><rect x="47" y="653" width="1" height="1" fill="#000"/><rect x="49" y="653" width="1" height="1" fill="#000"/><rect x="51" y="653" width="1" height="1" fill="#000"/><rect x="53" y="653" width="1" height="1" fill="#000"/><rect x="55" y="653" width="1" height="1" fill="#000"/></svg>
<div class="t rl" style="left:65px;top:111px">2</div>
<div class="t rl" style="left:103px;top:111px">0</div>
<div class="t rl" style="left:141px;top:111px">2</div>
<div class="t rl" style="left:179px;top:111px">4</div>
<div class="t rl" style="left:217px;top:111px">6</div>
<div class="t rl" style="left:254px;top:111px">8</div>
<div class="t rl" style="left:292px;top:111px">10</div>
<div class="t rl" style="left:330px;top:111px">12</div>
<div class="t rl" style="left:368px;top:111px">14</div>
<div class="t rl" style="left:406px;top:111px">16</div>
<div class="t rl" style="left:443px;top:111px">18</div>
<div class="t rl" style="left:481px;top:111px">20</div>
<div class="t rl" style="left:519px;top:111px">22</div>
<div class="t rl" style="left:557px;top:111px">24</div>
<div class="t rl" style="left:595px;top:111px">26</div>
<div class="t rl" style="left:633px;top:111px">28</div>
<div class="t rl" style="left:670px;top:111px">30</div>
<div class="t rl" style="left:708px;top:111px">32</div>
<div class="t rl" style="left:746px;top:111px">34</div>
<div class="t rl" style="left:784px;top:111px">36</div>
<div class="t rl" style="left:822px;top:111px">38</div>
<div class="t rl" style="left:860px;top:111px">40</div>
<div class="t rl" style="left:897px;top:111px">42</div>
<div class="t rl" style="left:935px;top:111px">44</div>
<div class="t rl" style="left:973px;top:111px">46</div>
<div class="t rl" style="left:44px;top:149px">2</div>
<div class="t rl" style="left:44px;top:187px">0</div>
<div class="t rl" style="left:44px;top:225px">2</div>
<div class="t rl" style="left:44px;top:263px">4</div>
<div class="t rl" style="left:44px;top:301px">6</div>
<div class="t rl" style="left:44px;top:338px">8</div>
<div class="t rl" style="left:44px;top:376px">1</div>
<div class="t rl" style="left:44px;top:384px">0</div>
<div class="t rl" style="left:44px;top:414px">1</div>
<div class="t rl" style="left:44px;top:422px">2</div>
<div class="t rl" style="left:44px;top:452px">1</div>
<div class="t rl" style="left:44px;top:460px">4</div>
<div class="t rl" style="left:44px;top:490px">1</div>
<div class="t rl" style="left:44px;top:498px">6</div>
<div class="t rl" style="left:44px;top:527px">1</div>
<div class="t rl" style="left:44px;top:535px">8</div>
<div class="t rl" style="left:44px;top:565px">2</div>
<div class="t rl" style="left:44px;top:573px">0</div>
<div class="t rl" style="left:44px;top:603px">2</div>
<div class="t rl" style="left:44px;top:611px">2</div>
<div class="t rl" style="left:44px;top:641px">2</div>
<div class="t rl" style="left:44px;top:649px">4</div>
<div class="t rl" style="left:44px;top:679px">2</div>
<div class="t rl" style="left:44px;top:687px">6</div>
<div class="t rl" style="left:44px;top:717px">2</div>
<div class="t rl" style="left:44px;top:725px">8</div>
<div class="t rl" style="left:44px;top:754px">3</div>
<div class="t rl" style="left:44px;top:762px">0</div>
<!-- CANVAS -->
<div class="a" style="left:101px;top:185px;width:854px;height:533px;box-shadow:1px 2px 3px rgba(0,0,0,.45);background:
linear-gradient(104deg,#1e0000 0%,#1d0002 16%,#14000b 24%,#080012 30%,#010013 36%,#00030f 44%,#00060a 50%,#000904 57%,#000a00 66%,#020800 78%,#040600 86%,#0a0200 93%,#1c0000 100%)"></div>
<svg style="left:101px;top:185px" width="854" height="533" viewBox="101 185 854 533">
<defs>
<linearGradient id="gs" gradientUnits="userSpaceOnUse" x1="255" y1="0" x2="815" y2="0"><stop offset="0" stop-color="#d9d3e2"/><stop offset="0.18" stop-color="#d3d0e2"/><stop offset="0.30" stop-color="#cad2e5"/><stop offset="0.42" stop-color="#c7dbe8"/><stop offset="0.52" stop-color="#c1dbdd"/><stop offset="0.62" stop-color="#c3dbcb"/><stop offset="0.75" stop-color="#cbdcc2"/><stop offset="0.84" stop-color="#d1dcb8"/><stop offset="0.92" stop-color="#d5dcae"/><stop offset="0.97" stop-color="#d8da8c"/><stop offset="1" stop-color="#d2c846"/></linearGradient>
<linearGradient id="gg" gradientUnits="userSpaceOnUse" x1="255" y1="0" x2="815" y2="0"><stop offset="0" stop-color="#a47cc8"/><stop offset="0.14" stop-color="#9478d0"/><stop offset="0.28" stop-color="#5e7ce8"/><stop offset="0.40" stop-color="#3c9cf0"/><stop offset="0.50" stop-color="#28c0d0"/><stop offset="0.60" stop-color="#20c070"/><stop offset="0.72" stop-color="#48b838"/><stop offset="0.84" stop-color="#88b038"/><stop offset="0.94" stop-color="#c0b830"/><stop offset="1" stop-color="#d4b818"/></linearGradient>
<filter id="b1" x="-20%" y="-40%" width="140%" height="180%"><feGaussianBlur stdDeviation="12"/></filter>
<filter id="b2" x="-20%" y="-40%" width="140%" height="180%"><feGaussianBlur stdDeviation="4.500"/></filter>
<filter id="b3" x="-20%" y="-40%" width="140%" height="180%"><feGaussianBlur stdDeviation="0.800"/></filter>
<g id="park" fill="none" stroke-linecap="round" stroke-linejoin="miter">
<!-- P -->
<path d="M260.500 361H325A38.500 40.500 0 0 1 325 442H281M281 361V505M260.500 505H322"/>
<!-- a -->
<path d="M417.500 406C432 400 445 396.500 456 396.500C478 396.500 490 410 490 430V505H511M490 447.500C478 446 462 446 448 448C420 452 405 464 405 482C405 500 420 509.500 440 509.500C460 509.500 478 502 490 488"/>
<!-- r -->
<path d="M561.500 402H587V505M556 505H638M588 434C600 418 622 398 642 398C650 398 655 403 659 410.500"/>
<!-- k -->
<path d="M705 350.500H726V505H705M727 448L782 401.500M767 401.500H803M741 442L793 505M777 505H812"/>
</g>
</defs>
<use href="#park" stroke="url(#gg)" stroke-width="22" filter="url(#b1)" opacity="0.400"/>
<use href="#park" stroke="url(#gg)" stroke-width="13" filter="url(#b2)" opacity="0.500"/>
<use href="#park" stroke="url(#gs)" stroke-width="10.800" filter="url(#b3)"/>
</svg>
<!-- v scrollbar -->
<div class="a" style="left:1000px;top:109px;width:15px;height:670px;background:linear-gradient(90deg,#e6e6e6,#f2f2f2 40%,#ececec);border-left:1px solid #d0d0d0"></div>
<div class="a" style="left:1015px;top:89px;width:1px;height:705px;background:#4a4a4a"></div>
<svg style="left:1004px;top:116px" width="8" height="5" viewBox="0 0 8 5"><path d="M0 5L4 0.500L8 5Z" fill="#a8a8a8"/></svg>
<svg style="left:1004px;top:769px" width="8" height="5" viewBox="0 0 8 5"><path d="M0 0L4 4.500L8 0Z" fill="#a8a8a8"/></svg>
<!-- status bar -->
<div class="a" style="left:42px;top:779px;width:973px;height:15px;background:#d6d6d6;border-top:1px solid #ececec"></div>
<div class="a" style="left:42px;top:779px;width:47px;height:15px;background:#fff"></div>
<div class="t lbl" style="left:48.63px;top:783.7px;transform:scaleX(0.9613)">66.67%</div>
<div class="a" style="left:89px;top:780px;width:23px;height:14px;background:#d2d2d2;border-right:1px solid #808080"></div>
<svg style="left:95px;top:781px" width="12" height="12" viewBox="0 0 12 12"><circle cx="6" cy="6" r="5.300" fill="#c8c8c8" stroke="#7a7a7a" stroke-width="1.200"/><path d="M3.500 3.500H6.500L8.500 5.500V8.500H3.500Z" fill="#e8e8e8" stroke="#666" stroke-width="0.800"/></svg>
<div class="t lbl" style="left:155.00px;top:783.7px;transform:scaleX(1.0034)">Doc: 3.91M/16.9M</div>
<div class="a" style="left:283px;top:780px;width:1px;height:14px;background:#9a9a9a"></div>
<svg style="left:286px;top:782px" width="7" height="10" viewBox="0 0 7 10"><path d="M0.500 0.500L6.500 5L0.500 9.500Z" fill="#000"/></svg>
<div class="a" style="left:296px;top:780px;width:704px;height:14px;background:linear-gradient(#e8e8e8,#f2f2f2 40%,#ececec)"></div>
<svg style="left:303px;top:783px" width="5" height="8" viewBox="0 0 5 8"><path d="M5 0L0.500 4L5 8Z" fill="#a8a8a8"/></svg>
<svg style="left:990px;top:783px" width="5" height="8" viewBox="0 0 5 8"><path d="M0 0L4.500 4L0 8Z" fill="#a8a8a8"/></svg>
<div class="a" style="left:1000px;top:779px;width:15px;height:15px;background:#d6d6d6"></div>
<!-- bottom frame -->
<div class="a" style="left:1px;top:794px;width:1279px;height:1px;background:#4a4a4a"></div>
<div class="a" style="left:1px;top:795px;width:1279px;height:3px;background:#efefef"></div>
<div class="a" style="left:0px;top:798px;width:1280px;height:1px;background:#444"></div>
<div class="a" style="left:0px;top:799px;width:1280px;height:1px;background:#c8c8c8"></div>
<div class="a" style="left:122px;top:799px;width:70px;height:1px;background:#fff;border-left:1px solid #222;border-right:1px solid #222"></div>
<div class="a" style="left:196px;top:799px;width:107px;height:1px;background:#fff;border-left:1px solid #222;border-right:1px solid #222"></div>
<!-- RIGHT DOCK -->
<div class="a" style="left:1016px;top:89px;width:260px;height:705px;background:#666"></div>
<div class="a" style="left:1016px;top:89px;width:260px;height:13px;background:linear-gradient(#5a5a5a,#404040);border-bottom:1px solid #000"></div>
<div class="a" style="left:1275px;top:89px;width:1px;height:705px;background:#4a4a4a"></div>
<div class="a" style="left:1276px;top:0;width:2px;height:800px;background:#f8f8f8"></div><div class="a" style="left:1278px;top:0;width:1px;height:800px;background:#e2e2e2"></div><div class="a" style="left:1279px;top:0;width:1px;height:800px;background:#7c7c7c"></div>
<svg style="left:1041px;top:93px" width="8" height="6" viewBox="0 0 8 6"><path d="M4 0L0 3L4 6ZM8 0L4 3L8 6Z" fill="#d8d8d8"/></svg>
<svg style="left:1264px;top:93px" width="8" height="6" viewBox="0 0 8 6"><path d="M0 0L4 3L0 6ZM4 0L8 3L4 6Z" fill="#d8d8d8"/></svg>
<!-- icon column -->
<div class="a" style="left:1016px;top:102px;width:35px;height:87px;background:#d6d6d6;border-left:1px solid #ececec;border-right:1px solid #555"></div>
<div class="a" style="left:1016px;top:145px;width:35px;height:1px;background:#555"></div>
<div class="a" style="left:1016px;top:146px;width:34px;height:1px;background:#ececec"></div>
<div class="a" style="left:1016px;top:189px;width:35px;height:1px;background:#444"></div>
<div class="a" style="left:1020px;top:106px;width:28px;height:3px;background-image:radial-gradient(circle at 0.5px 0.5px,#9c9c9c 0.6px,transparent 0.7px);background-size:2px 2px"></div>
<div class="a" style="left:1020px;top:150px;width:28px;height:3px;background-image:radial-gradient(circle at 0.5px 0.5px,#9c9c9c 0.6px,transparent 0.7px);background-size:2px 2px"></div>
<svg style="left:1025px;top:119px" width="18" height="17" viewBox="0 0 18 17"><defs><linearGradient id="gmb" x1="0" y1="0" x2="0" y2="1"><stop offset="0" stop-color="#dadada"/><stop offset="1" stop-color="#a8a8a8"/></linearGradient></defs><path d="M0.500 16.500V0.500H5.500L7.500 2.500H16.500V16.500Z" fill="url(#gmb)" stroke="#2e2e2e"/><path d="M0.500 16.500H16.500" stroke="#333" stroke-width="1.500"/></svg>
<div class="t" style="left:1027.5px;top:124px;font-size:10px;color:#1a1a1a;letter-spacing:-0.300px;-webkit-text-stroke:0.3px #1a1a1a">Mb</div>
<!-- history icon -->
<svg style="left:1027px;top:163px" width="16" height="18" viewBox="0 0 16 18"><rect x="0.500" y="0.500" width="4" height="4" fill="#fff" stroke="#444"/><rect x="0.500" y="6.500" width="4" height="4" fill="#fff" stroke="#444"/><rect x="0" y="12" width="5" height="5" fill="#555"/><path d="M9 4.500C14 4.500 14.500 12 10 15.500" fill="none" stroke="#555" stroke-width="2"/><path d="M7 4.500L12 1V8Z" fill="#444"/></svg>

<!-- COLOR PANEL -->
<div class="a" style="left:1052px;top:102px;width:223px;height:17px;background:linear-gradient(#949494,#8a8a8a);border-top:1px solid #a4a4a4;border-bottom:1px solid #707070"></div>
<div class="a" style="left:1052px;top:119px;width:223px;height:98px;background:#d6d6d6"></div>
<div class="a" style="left:1052px;top:102px;width:48px;height:18px;background:linear-gradient(#f4f4f4,#dcdcdc 70%,#d6d6d6);border-right:1px solid #6a6a6a"></div>
<div class="a" style="left:1100px;top:102px;width:68px;height:17px;border-right:1px solid #6a6a6a;border-top:1px solid #b0b0b0;background:linear-gradient(#a6a6a6,#989898)"></div>
<div class="a" style="left:1168px;top:102px;width:49px;height:17px;border-right:1px solid #6a6a6a;border-top:1px solid #b0b0b0;background:linear-gradient(#a6a6a6,#989898)"></div>
<div class="t ptab" style="left:1059.10px;top:107px;color:#333;transform:scaleX(0.9307)" id="pt1">COLOR</div>
<div class="t ptab" style="left:1106.42px;top:107px;transform:scaleX(0.9682)" id="pt2">SWATCHES</div>
<div class="t ptab" style="left:1174.96px;top:107px;transform:scaleX(0.8601)" id="pt3">STYLES</div>
<svg style="left:1257px;top:106px" width="14" height="9" viewBox="0 0 14 9"><path d="M0 2H5L2.500 5Z" fill="#333"/><path d="M6 1.500H14M6 3.500H14M6 5.500H14M6 7.500H14" stroke="#333" stroke-width="1"/></svg>
<!-- swatches -->
<div class="a" style="left:1072px;top:140px;width:20px;height:20px;background:#000;border:1px solid #8a8a8a;box-shadow:inset 0 0 0 1px #d6d6d6"></div>
<div class="a" style="left:1060px;top:128px;width:20px;height:20px;background:#fff;border:1px solid #000;box-shadow:0 0 0 1px #d6d6d6"></div>
<div class="t lbl" style="left:1096px;top:129px;font-size:9px;font-weight:bold;color:#222">R</div>
<div class="t lbl" style="left:1096px;top:152px;font-size:9px;font-weight:bold;color:#222">G</div>
<div class="t lbl" style="left:1096px;top:175px;font-size:9px;font-weight:bold;color:#222">B</div>
<div class="a" style="left:1109px;top:130px;width:101px;height:6px;background:linear-gradient(90deg,#00ffff,#fff);border:1px solid #8e8e8e"></div>
<div class="a" style="left:1109px;top:153px;width:101px;height:6px;background:linear-gradient(90deg,#ff00ff,#fff);border:1px solid #8e8e8e"></div>
<div class="a" style="left:1109px;top:176px;width:101px;height:6px;background:linear-gradient(90deg,#ffff00,#fff);border:1px solid #8e8e8e"></div>
<svg style="left:1204px;top:136px" width="11" height="9" viewBox="0 0 11 9"><path d="M5.500 1L10 7.500H1Z" fill="#fff" stroke="#2e9a2e" stroke-width="1.400" stroke-linejoin="round"/></svg>
<svg style="left:1204px;top:159px" width="11" height="9" viewBox="0 0 11 9"><path d="M5.500 1L10 7.500H1Z" fill="#fff" stroke="#2e9a2e" stroke-width="1.400" stroke-linejoin="round"/></svg>
<svg style="left:1204px;top:182px" width="11" height="9" viewBox="0 0 11 9"><path d="M5.500 1L10 7.500H1Z" fill="#fff" stroke="#2e9a2e" stroke-width="1.400" stroke-linejoin="round"/></svg>
<div class="a" style="left:1216px;top:126px;width:31px;height:18px;background:#fff;border:1px solid #e4e4e4"></div>
<div class="a" style="left:1216px;top:149px;width:31px;height:18px;background:#fff;border:1px solid #e4e4e4"></div>
<div class="a" style="left:1216px;top:172px;width:31px;height:18px;background:#fff;border:1px solid #e4e4e4"></div>
<div class="t lbl" style="left:1221.28px;top:131px;transform:scaleX(0.9306)">255</div>
<div class="t lbl" style="left:1221.28px;top:154px;transform:scaleX(0.9306)">255</div>
<div class="t lbl" style="left:1221.28px;top:177px;transform:scaleX(0.9306)">255</div>
<!-- ramp -->
<div class="a" style="left:1058px;top:198px;width:190px;height:15px;background:linear-gradient(rgba(255,255,255,.95) 0%,rgba(255,255,255,0) 45%,rgba(0,0,0,0) 55%,rgba(0,0,0,.92) 100%),linear-gradient(90deg,#ff0000 0%,#ffff00 16%,#00c000 33%,#00b0f0 50%,#2020c0 66%,#e000a0 84%,#ff0000 100%)"></div>
<div class="a" style="left:1248px;top:198px;width:8px;height:7px;background:#fff"></div>
<div class="a" style="left:1248px;top:205px;width:8px;height:8px;background:#000"></div>
<div class="a" style="left:1052px;top:217px;width:223px;height:3px;background:#3c3c3c"></div>

<!-- ADJUSTMENTS PANEL -->
<div class="a" style="left:1052px;top:220px;width:223px;height:17px;background:linear-gradient(#949494,#8a8a8a);border-top:1px solid #a4a4a4;border-bottom:1px solid #707070"></div>
<div class="a" style="left:1052px;top:237px;width:223px;height:339px;background:#d6d6d6"></div>
<div class="a" style="left:1052px;top:220px;width:86px;height:18px;background:linear-gradient(#f4f4f4,#dcdcdc 70%,#d6d6d6);border-right:1px solid #6a6a6a"></div>
<div class="a" style="left:1138px;top:220px;width:50px;height:17px;border-right:1px solid #6a6a6a;border-top:1px solid #b0b0b0;background:linear-gradient(#a6a6a6,#989898)"></div>
<div class="t ptab" style="left:1058.51px;top:225px;color:#333;transform:scaleX(0.9591)" id="pt4">ADJUSTMENTS</div>
<div class="t ptab" style="left:1145.08px;top:225px;transform:scaleX(0.9736)" id="pt5">MASKS</div>
<svg style="left:1257px;top:224px" width="14" height="9" viewBox="0 0 14 9"><path d="M0 2H5L2.500 5Z" fill="#333"/><path d="M6 1.500H14M6 3.500H14M6 5.500H14M6 7.500H14" stroke="#333" stroke-width="1"/></svg>
<div class="t" style="left:1057.64px;top:244.8px;font-size:10px;font-weight:bold;color:#111;transform:scaleX(1.0526)" id="addadj">Add an adjustment</div>
<div class="a" style="left:1054px;top:266px;width:210px;height:1px;background:#8e8e8e"></div>
<div class="a" style="left:1099px;top:306px;width:120px;height:1px;background:#8e8e8e"></div>
<div class="a" style="left:1099px;top:346px;width:120px;height:1px;background:#8e8e8e"></div>
<!-- adjustment icons row 1 -->
<svg style="left:1103px;top:277px" width="24" height="20" viewBox="0 0 24 20"><rect width="24" height="20" fill="#fff"/><circle cx="12" cy="10" r="4.500" fill="#fff" stroke="#222" stroke-width="1.200"/><path d="M12 5.500A4.500 4.500 0 0 0 12 14.500Z" fill="#222"/><path d="M12 1.500V3.500M12 16.500V18.500M3.500 10H5.500M18.500 10H20.500M6 4L7.500 5.500M18 4L16.500 5.500M6 16L7.500 14.500M18 16L16.500 14.500" stroke="#222" stroke-width="1.500"/></svg>
<svg style="left:1132px;top:277px" width="24" height="20" viewBox="0 0 24 20"><rect width="24" height="20" fill="#fff"/><path d="M3 15V11L4.500 8L5.500 10L6.500 6L7.500 9L8.500 7L9.500 10L10.500 5L11.500 8L12.500 2.500L13.500 7L14.500 9L15.500 6L16.500 9.500L17.500 5.500L18.500 9L19.500 7L20.500 10V15Z" fill="#444"/><path d="M3 18.500L4.500 16.500L6 18.500ZM10.500 18.500L12 16.500L13.500 18.500Z" fill="#333"/><path d="M18.500 18.500L20 16.500L21.500 18.500Z" fill="#aaa"/></svg>
<svg style="left:1161px;top:277px" width="24" height="20" viewBox="0 0 24 20"><rect width="24" height="20" fill="#fff"/><path d="M3.500 1V18.500H21M8 1V18M12.500 1V18M17 1V18M21 1V18M3.500 1.500H21M3.500 6H21M3.500 10H21M3.500 14.500H21" stroke="#777" stroke-width="0.900" fill="none"/><path d="M3.500 18.500C12 18.500 11 2 21 1.500" fill="none" stroke="#111" stroke-width="1.500"/></svg>
<svg style="left:1190px;top:277px" width="24" height="20" viewBox="0 0 24 20"><rect width="24" height="20" fill="#eee"/><path d="M1 19L23 1V19Z" fill="#8c8c8c"/><path d="M3 6.500H9M6 3.500V9.500" stroke="#888" stroke-width="1.500"/><path d="M16 14.500H21" stroke="#fff" stroke-width="1.800"/><rect x="0.500" y="0.500" width="23" height="19" fill="none" stroke="#e2e2e2"/></svg>
<!-- row 2 -->
<svg style="left:1074px;top:317px" width="24" height="20" viewBox="0 0 24 20"><defs><linearGradient id="gv" x1="0" y1="0" x2="1" y2="0"><stop offset="0" stop-color="#a4a4a4"/><stop offset="0.500" stop-color="#e8e8e8"/><stop offset="1" stop-color="#a0a0a0"/></linearGradient></defs><rect width="24" height="20" fill="#dedede"/><path d="M4.500 1.500H19.500L12 18.500Z" fill="url(#gv)" stroke="#bcbcbc" stroke-width="0.600"/></svg>
<svg style="left:1103px;top:317px" width="24" height="20" viewBox="0 0 24 20"><defs><linearGradient id="gh1" x1="0" y1="0" x2="1" y2="0"><stop offset="0" stop-color="#333"/><stop offset="0.200" stop-color="#aaa"/><stop offset="0.400" stop-color="#555"/><stop offset="0.600" stop-color="#bbb"/><stop offset="0.800" stop-color="#666"/><stop offset="1" stop-color="#999"/></linearGradient><linearGradient id="gh3" x1="0" y1="0" x2="1" y2="0"><stop offset="0" stop-color="#111"/><stop offset="1" stop-color="#fff"/></linearGradient></defs><rect width="24" height="20" fill="#fff"/><rect x="1.500" y="1.500" width="21" height="5" fill="url(#gh1)"/><rect x="1.500" y="8" width="21" height="4.500" fill="#808080"/><rect x="1.500" y="14" width="21" height="4.500" fill="url(#gh3)"/></svg>
<svg style="left:1132px;top:317px" width="24" height="20" viewBox="0 0 24 20"><rect width="24" height="20" fill="#fff"/><path d="M12 1V6M5 5.500H19" stroke="#222" stroke-width="2"/><rect x="10" y="2.500" width="4" height="3" fill="#222"/><path d="M5.500 6L2 15H9ZM18.500 6L15 15H22Z" fill="none" stroke="#222" stroke-width="1"/><path d="M1.500 15H9.500C9.500 19.500 1.500 19.500 1.500 15ZM14.500 15H22.500C22.500 19.500 14.500 19.500 14.500 15Z" fill="#222"/></svg>
<svg style="left:1161px;top:317px" width="24" height="20" viewBox="0 0 24 20"><rect width="24" height="20" fill="#e4e4e4"/><path d="M1.500 1.500H22.500L1.500 18.500Z" fill="#8a8a8a"/><rect x="1" y="1" width="22" height="18" fill="none" stroke="#d4d4d4"/></svg>
<svg style="left:1190px;top:317px" width="24" height="20" viewBox="0 0 24 20"><rect width="24" height="20" fill="#fff"/><rect x="7.500" y="10.500" width="15" height="8.500" fill="#777" stroke="#444" stroke-width="0.800"/><rect x="16" y="8.500" width="4" height="2.500" fill="#666"/><circle cx="16.500" cy="14.500" r="3" fill="#333" stroke="#999" stroke-width="0.800"/><circle cx="8" cy="7.500" r="6" fill="#c8c8c8" fill-opacity="0.900" stroke="#777" stroke-width="0.900"/></svg>
<svg style="left:1219px;top:317px" width="24" height="20" viewBox="0 0 24 20"><rect width="24" height="20" fill="#fff"/><circle cx="12" cy="6.500" r="5.500" fill="#7a7a7a"/><circle cx="16" cy="13" r="5.500" fill="#555" fill-opacity="0.900"/><circle cx="8" cy="13" r="5.500" fill="#d0d0d0" fill-opacity="0.900"/><path d="M12 9L9 12L13 13Z" fill="#eee"/></svg>
<!-- row 3 -->
<svg style="left:1089px;top:357px" width="24" height="20" viewBox="0 0 24 20"><rect width="24" height="20" fill="#fff"/><rect x="1.500" y="1.500" width="12" height="9" fill="#fff" stroke="#333"/><path d="M7 6L9.500 3L12 6Z" fill="#444"/><rect x="3.500" y="6" width="3" height="2.500" fill="#555"/><rect x="10" y="8" width="13" height="11" fill="#111"/><path d="M16 12L18.500 9.500L21 12Z" fill="#eee"/><rect x="12.500" y="13.500" width="4" height="3" fill="#fff"/></svg>
<svg style="left:1118px;top:357px" width="24" height="20" viewBox="0 0 24 20"><defs><linearGradient id="gp" x1="0" y1="0" x2="1" y2="1"><stop offset="0" stop-color="#555"/><stop offset="0.250" stop-color="#8a8a8a"/><stop offset="0.400" stop-color="#6a6a6a"/><stop offset="0.550" stop-color="#9a9a9a"/><stop offset="0.700" stop-color="#777"/><stop offset="0.850" stop-color="#aaa"/><stop offset="1" stop-color="#888"/></linearGradient></defs><rect width="24" height="20" fill="#fff"/><rect x="1.500" y="1.500" width="21" height="17" fill="url(#gp)"/></svg>
<svg style="left:1147px;top:357px" width="24" height="20" viewBox="0 0 24 20"><rect width="24" height="20" fill="#fff"/><path d="M1.500 1.500H17L1.500 18.500Z" fill="#222"/><path d="M22.500 1.500V6L10 18.500H5.500Z" fill="#222"/></svg>
<svg style="left:1176px;top:357px" width="24" height="20" viewBox="0 0 24 20"><defs><linearGradient id="gm" x1="0" y1="0" x2="1" y2="0"><stop offset="0" stop-color="#fff"/><stop offset="1" stop-color="#000"/></linearGradient></defs><rect width="24" height="20" fill="#fff"/><rect x="1.500" y="1.500" width="21" height="17" fill="url(#gm)"/></svg>
<svg style="left:1205px;top:357px" width="24" height="20" viewBox="0 0 24 20"><rect width="24" height="20" fill="#fff"/><path d="M1.500 1.500H22.500L12 10Z" fill="#ccc"/><path d="M1.500 1.500L12 10L1.500 18.500Z" fill="#bbb"/><path d="M22.500 1.500L12 10L22.500 18.500Z" fill="#999"/><path d="M1.500 18.500L12 10L22.500 18.500Z" fill="#222"/><path d="M1.500 1.500L22.500 18.500M22.500 1.500L1.500 18.500" stroke="#fff" stroke-width="1.200"/></svg>
<!-- preset list -->
<div class="a" style="left:1065px;top:395px;width:189px;height:148px;background:#ececec;border-top:1px solid #8a8a8a"></div>
<div class="a" style="left:1065px;top:395px;width:173px;height:148px;background:#d6d6d6;border:1px solid #222;background-image:repeating-linear-gradient(180deg,transparent 0,transparent 20px,#111 20px,#111 21px)"></div>
<svg style="left:1243px;top:402px" width="8" height="5" viewBox="0 0 8 5"><path d="M0 5L4 0.500L8 5Z" fill="#a0a0a0"/></svg>
<svg style="left:1243px;top:532px" width="8" height="5" viewBox="0 0 8 5"><path d="M0 0L4 4.500L8 0Z" fill="#a0a0a0"/></svg>
<svg style="left:1070px;top:399px" width="7" height="11" viewBox="0 0 7 11"><path d="M0.600 0.600L6.200 5.500L0.600 10.400Z" fill="#b4b4f4" stroke="#1c1c3c" stroke-width="1.100"/></svg>
<div class="t lbl pl" style="left:1085.04px;top:402px;transform:scaleX(0.9386)">Levels Presets</div>
<svg style="left:1070px;top:420px" width="7" height="11" viewBox="0 0 7 11"><path d="M0.600 0.600L6.200 5.500L0.600 10.400Z" fill="#b4b4f4" stroke="#1c1c3c" stroke-width="1.100"/></svg>
<div class="t lbl pl" style="left:1084.84px;top:423px;transform:scaleX(0.9632)">Curves Presets</div>
<svg style="left:1070px;top:441px" width="7" height="11" viewBox="0 0 7 11"><path d="M0.600 0.600L6.200 5.500L0.600 10.400Z" fill="#b4b4f4" stroke="#1c1c3c" stroke-width="1.100"/></svg>
<div class="t lbl pl" style="left:1084.00px;top:444px;transform:scaleX(0.9774)">Exposure Presets</div>
<svg style="left:1070px;top:462px" width="7" height="11" viewBox="0 0 7 11"><path d="M0.600 0.600L6.200 5.500L0.600 10.400Z" fill="#b4b4f4" stroke="#1c1c3c" stroke-width="1.100"/></svg>
<div class="t lbl pl" style="left:1084.00px;top:465px;transform:scaleX(0.9938)">Hue/Saturation Presets</div>
<svg style="left:1070px;top:483px" width="7" height="11" viewBox="0 0 7 11"><path d="M0.600 0.600L6.200 5.500L0.600 10.400Z" fill="#b4b4f4" stroke="#1c1c3c" stroke-width="1.100"/></svg>
<div class="t lbl pl" style="left:1085.00px;top:486px;transform:scaleX(0.9888)">Black &amp; White Presets</div>
<svg style="left:1070px;top:504px" width="7" height="11" viewBox="0 0 7 11"><path d="M0.600 0.600L6.200 5.500L0.600 10.400Z" fill="#b4b4f4" stroke="#1c1c3c" stroke-width="1.100"/></svg>
<div class="t lbl pl" style="left:1085.35px;top:507px;transform:scaleX(0.9674)">Channel Mixer Presets</div>
<svg style="left:1070px;top:525px" width="7" height="11" viewBox="0 0 7 11"><path d="M0.600 0.600L6.200 5.500L0.600 10.400Z" fill="#b4b4f4" stroke="#1c1c3c" stroke-width="1.100"/></svg>
<div class="t lbl pl" style="left:1084.90px;top:528px;transform:scaleX(0.9703)">Selective Color Presets</div>
<div class="a" style="left:1054px;top:557px;width:210px;height:1px;background:#8e8e8e"></div>
<svg style="left:1086px;top:559px" width="17" height="14" viewBox="0 0 17 14"><rect x="0.500" y="0.500" width="12" height="9" fill="#f4f4f4" stroke="#222"/><path d="M2.500 2.500L7.500 7.500M2.500 2.500H6M2.500 2.500V6" stroke="#111" stroke-width="1.200" fill="none"/><rect x="10.500" y="7.500" width="5" height="5" fill="#fff" stroke="#222"/></svg>
<svg style="left:1239px;top:559px" width="21" height="14" viewBox="0 0 21 14"><ellipse cx="18" cy="7" rx="2.500" ry="5" fill="#333"/><ellipse cx="13.500" cy="7" rx="3.500" ry="6" fill="#333" stroke="#d6d6d6" stroke-width="0.800"/><ellipse cx="6.500" cy="7" rx="6" ry="6.500" fill="#333"/><path d="M1 9C3 13.500 10 13.500 12 9C9 11 4 11 1 9Z" fill="#eee"/></svg>
<div class="a" style="left:1052px;top:576px;width:223px;height:4px;background:#3c3c3c"></div>
<!-- LAYERS PANEL -->
<div class="a" style="left:1052px;top:580px;width:223px;height:16px;background:linear-gradient(#949494,#8a8a8a);border-top:1px solid #a4a4a4;border-bottom:1px solid #707070"></div>
<div class="a" style="left:1052px;top:596px;width:223px;height:198px;background:#d6d6d6"></div>
<div class="a" style="left:1052px;top:580px;width:51px;height:17px;background:linear-gradient(#f4f4f4,#dcdcdc 70%,#d6d6d6);border-right:1px solid #6a6a6a"></div>
<div class="a" style="left:1103px;top:580px;width:67px;height:16px;border-right:1px solid #6a6a6a;border-top:1px solid #b0b0b0;background:linear-gradient(#a6a6a6,#989898)"></div>
<div class="a" style="left:1170px;top:580px;width:47px;height:16px;border-right:1px solid #6a6a6a;border-top:1px solid #b0b0b0;background:linear-gradient(#a6a6a6,#989898)"></div>
<div class="t ptab" style="left:1058.91px;top:584px;color:#333;transform:scaleX(0.8977)" id="pt6">LAYERS</div>
<div class="t ptab" style="left:1109.18px;top:584px;transform:scaleX(0.9455)" id="pt7">CHANNELS</div>
<div class="t ptab" style="left:1176.22px;top:584px;transform:scaleX(1.0282)" id="pt8">PATHS</div>
<svg style="left:1257px;top:584px" width="14" height="9" viewBox="0 0 14 9"><path d="M0 2H5L2.500 5Z" fill="#333"/><path d="M6 1.500H14M6 3.500H14M6 5.500H14M6 7.500H14" stroke="#333" stroke-width="1"/></svg>
<!-- blend / opacity -->
<div class="a" style="left:1057px;top:600px;width:115px;height:17px;background:#fff;border:1px solid #e0e0e0"></div>
<div class="t lbl" style="left:1059.95px;top:604.7px;transform:scaleX(1.0057)">Color</div>
<div class="a dds" style="left:1161px;top:608px"></div>
<div class="t lbl" style="left:1175.59px;top:603.8px;transform:scaleX(1.0778)" id="lop">Opacity:</div>
<div class="a" style="left:1217px;top:600px;width:37px;height:17px;background:#fff;border:1px solid #e0e0e0"></div>
<div class="t lbl" style="left:1222.34px;top:605px;transform:scaleX(0.9860)">100%</div>
<div class="a" style="left:1254px;top:600px;width:15px;height:17px;border:1px solid #b4b4b4;background:linear-gradient(#f0f0f0,#d4d4d4)"></div>
<div class="a" style="left:1259px;top:605px;width:0;height:0;border-top:3.500px solid transparent;border-bottom:3.500px solid transparent;border-left:4px solid #3a5aa8"></div>
<div class="a" style="left:1054px;top:620px;width:219px;height:1px;background:#a8a8a8;box-shadow:0 1px 0 #e6e6e6"></div>
<!-- lock row -->
<div class="t lbl" style="left:1059.00px;top:630px;transform:scaleX(1.0943)" id="llock">Lock:</div>
<div class="a" style="left:1092px;top:628px;width:11px;height:11px;border:1px solid #777;background:#fff;background-image:linear-gradient(45deg,#ccc 25%,transparent 25%,transparent 75%,#ccc 75%),linear-gradient(45deg,#ccc 25%,transparent 25%,transparent 75%,#ccc 75%);background-size:6px 6px;background-position:0 0,3px 3px"></div>
<svg style="left:1109px;top:627px" width="14" height="13" viewBox="0 0 14 13"><path d="M13 0.500L7 7" stroke="#555" stroke-width="1.600"/><path d="M0.500 12.500C3 13 7 11.500 8 8.500L6 6.500C5 9 2.500 10 0.500 12.500Z" fill="#333"/></svg>
<svg style="left:1128px;top:628px" width="12" height="12" viewBox="0 0 12 12"><path d="M6 1V11M1 6H11" stroke="#222" stroke-width="1.200"/><path d="M6 0L8 2.500H4ZM6 12L8 9.500H4ZM0 6L2.500 4V8ZM12 6L9.500 4V8Z" fill="#222"/></svg>
<svg style="left:1146px;top:629px" width="11" height="10.500" viewBox="0 0 11 12" preserveAspectRatio="none"><path d="M2.500 5.500V3.500A3 3 0 0 1 8.500 3.500V5.500" fill="none" stroke="#333" stroke-width="1.500"/><rect x="0.500" y="5.500" width="10" height="6.500" fill="#333"/><rect x="4" y="7.500" width="3" height="2.500" fill="#999"/></svg>
<div class="t lbl" style="left:1198.50px;top:630px;transform:scaleX(1.0395)" id="lfill">Fill:</div>
<div class="a" style="left:1217px;top:626px;width:37px;height:17px;background:#fff;border:1px solid #e0e0e0"></div>
<div class="t lbl" style="left:1222.60px;top:630px;transform:scaleX(0.9793)">100%</div>
<div class="a" style="left:1254px;top:626px;width:15px;height:17px;border:1px solid #b4b4b4;background:linear-gradient(#f0f0f0,#d4d4d4)"></div>
<div class="a" style="left:1259px;top:631px;width:0;height:0;border-top:3.500px solid transparent;border-bottom:3.500px solid transparent;border-left:4px solid #3a5aa8"></div>
<!-- list -->
<div class="a" style="left:1054px;top:646px;width:220px;height:1px;background:#9a9a9a"></div>
<div class="a" style="left:1076px;top:647px;width:1px;height:130px;background:#9a9a9a"></div>
<div class="a" style="left:1077px;top:647px;width:181px;height:28px;background:#3399ff"></div>
<div class="a" style="left:1054px;top:674px;width:204px;height:1px;background:#b0b0b0"></div>
<!-- eyes -->
<div class="a" style="left:1057px;top:652px;width:16px;height:16px;background:#dedede;border:1px solid #c2c2c2"></div>
<div class="a" style="left:1057px;top:680px;width:16px;height:16px;background:#dedede;border:1px solid #c2c2c2"></div>
<div class="a" style="left:1057px;top:746px;width:16px;height:16px;background:#dedede;border:1px solid #c2c2c2"></div>
<svg style="left:1059px;top:655px" width="12" height="10" viewBox="0 0 12 10"><path d="M0.500 5C3 0.500 9 0.500 11.500 5C9 9 3 9 0.500 5Z" fill="#f4f4f4" stroke="#222" stroke-width="1"/><path d="M0.500 4.500C3 0.500 9 0.500 11.500 4.500" fill="none" stroke="#111" stroke-width="1.800"/><circle cx="6" cy="5" r="2.500" fill="#111"/></svg>
<svg style="left:1059px;top:683px" width="12" height="10" viewBox="0 0 12 10"><path d="M0.500 5C3 0.500 9 0.500 11.500 5C9 9 3 9 0.500 5Z" fill="#f4f4f4" stroke="#222" stroke-width="1"/><path d="M0.500 4.500C3 0.500 9 0.500 11.500 4.500" fill="none" stroke="#111" stroke-width="1.800"/><circle cx="6" cy="5" r="2.500" fill="#111"/></svg>
<svg style="left:1059px;top:749px" width="12" height="10" viewBox="0 0 12 10"><path d="M0.500 5C3 0.500 9 0.500 11.500 5C9 9 3 9 0.500 5Z" fill="#f4f4f4" stroke="#222" stroke-width="1"/><path d="M0.500 4.500C3 0.500 9 0.500 11.500 4.500" fill="none" stroke="#111" stroke-width="1.800"/><circle cx="6" cy="5" r="2.500" fill="#111"/></svg>
<!-- layer 1 thumb -->
<div class="a" style="left:1078px;top:648px;width:36px;height:26px;background:#000"></div>
<div class="a" style="left:1079px;top:649px;width:34px;height:24px;border:1px solid #fff"></div>
<div class="a" style="left:1088px;top:648px;width:16px;height:26px;background:#000"></div>
<div class="a" style="left:1078px;top:655px;width:36px;height:12px;background:#000"></div>
<div class="a" style="left:1081px;top:651px;width:30px;height:20px;background:linear-gradient(104deg,#e81c24 0%,#c8285a 12%,#8a3a9a 26%,#3a62c0 38%,#30a8d8 50%,#38b060 62%,#8cc030 72%,#f0e010 84%,#f08018 93%,#e81c24 100%)"></div>
<div class="t" style="left:1119.90px;top:658px;font-size:10px;font-weight:bold;color:#fff;transform:scaleX(1.0892)" id="ly1">Layer 1</div>
<!-- park copy -->
<div class="a ck" style="left:1080px;top:678px"></div>
<div class="t lbl" style="left:1119.00px;top:686px;transform:scaleX(1.0653)" id="ly2">Park copy</div>
<div class="a" style="left:1247px;top:675px;width:11px;height:29px;background:#cdcdcd;border-left:1px solid #bdbdbd"></div>
<div class="t fx" style="left:1229px;top:682px">fx</div>
<svg style="left:1249px;top:686px" width="7" height="4" viewBox="0 0 7 4"><path d="M0 4L3.500 0L7 4Z" fill="#333"/></svg>
<div class="t lbl" style="left:1113.00px;top:707.5px;transform:scaleX(0.9902)" id="ly3">Effects</div>
<div class="a" style="left:1110px;top:722px;width:148px;height:1px;background:#9a9a9a"></div>
<svg style="left:1115px;top:726px" width="12" height="9" viewBox="0 0 12 10"><path d="M0.500 5C3 0.500 9 0.500 11.500 5C9 9 3 9 0.500 5Z" fill="#e4e4e4" stroke="#777" stroke-width="1"/><path d="M0.500 4.500C3 0.500 9 0.500 11.500 4.500" fill="none" stroke="#666" stroke-width="1.600"/><circle cx="6" cy="5" r="2.400" fill="#777"/></svg>
<div class="t lbl" style="left:1131.78px;top:726.6px;transform:scaleX(1.0223)" id="ly4">Outer Glow</div>
<div class="a" style="left:1054px;top:740px;width:204px;height:1px;background:#9a9a9a"></div>
<!-- park -->
<div class="a ck" style="left:1080px;top:744px"></div>
<div class="t lbl" style="left:1119.00px;top:752px;transform:scaleX(1.0474)" id="ly5">Park</div>
<div class="a" style="left:1247px;top:741px;width:11px;height:29px;background:#cdcdcd;border-left:1px solid #bdbdbd"></div>
<div class="t fx" style="left:1229px;top:748px">fx</div>
<svg style="left:1249px;top:752px" width="7" height="4" viewBox="0 0 7 4"><path d="M0 4L3.500 0L7 4Z" fill="#333"/></svg>
<div class="a" style="left:1114px;top:773px;width:40px;height:3.500px;overflow:hidden"><div class="t lbl" style="left:0;top:0;transform:scaleX(0.9902)">Effects</div></div>
<!-- layers scrollbar -->
<div class="a" style="left:1258px;top:647px;width:15px;height:130px;background:linear-gradient(90deg,#e4e4e4,#f4f4f4 50%,#e8e8e8);border-left:1px solid #cfcfcf"></div>
<svg style="left:1262px;top:654px" width="8" height="5" viewBox="0 0 8 5"><path d="M0 5L4 0.500L8 5Z" fill="#444"/></svg>
<svg style="left:1262px;top:766px" width="8" height="5" viewBox="0 0 8 5"><path d="M0 0L4 4.500L8 0Z" fill="#666"/></svg>
<div class="a" style="left:1260px;top:666px;width:12px;height:61px;border:1px solid #9a9a9a;border-radius:2px;background:linear-gradient(90deg,#f4f4f4,#dcdcdc 50%,#c4c4c4)"></div>
<div class="a" style="left:1263px;top:692px;width:6px;height:1px;background:#555;box-shadow:0 3px 0 #555,0 6px 0 #555"></div>
<!-- bottom bar -->
<div class="a" style="left:1054px;top:776px;width:220px;height:1px;background:#8e8e8e"></div>
<div class="a" style="left:1052px;top:777px;width:223px;height:17px;background:#d6d6d6"></div>
<svg style="left:1073px;top:781px" width="19" height="8" viewBox="0 0 19 8"><rect x="1" y="1" width="9" height="6" rx="3" fill="none" stroke="#777" stroke-width="1.500"/><rect x="9" y="1" width="9" height="6" rx="3" fill="none" stroke="#777" stroke-width="1.500"/><path d="M6 4H13" stroke="#555" stroke-width="1.500"/></svg>
<div class="t fx" style="left:1103.500px;top:777.500px;font-size:13px">fx</div>
<div class="a" style="left:1117px;top:790px;width:0;height:0;border-left:2px solid transparent;border-right:2px solid transparent;border-top:2.500px solid #111"></div>
<div class="a" style="left:1130px;top:779px;width:14px;height:12px;background:#8a8a8a;border:1px solid #444"></div>
<div class="a" style="left:1133px;top:781px;width:8px;height:8px;border-radius:50%;background:#fff;border:1px solid #555"></div>
<svg style="left:1158px;top:779px" width="17" height="13" viewBox="0 0 17 13"><circle cx="6" cy="6" r="5.300" fill="#fff" stroke="#333" stroke-width="1.100"/><path d="M2.200 9.800A5.300 5.300 0 0 1 9.800 2.200Z" fill="#333"/><path d="M12.500 10.500H16.500L14.500 13Z" fill="#111"/></svg>
<svg style="left:1185px;top:780px" width="11.500" height="9" viewBox="0 0 12 10"><path d="M0.500 9.500V0.500H4L5 1.500H11.500V9.500Z" fill="#f4f4f4" stroke="#555"/><path d="M1 9.500H11.500V2" stroke="#333" fill="none"/></svg>
<svg style="left:1213px;top:780px" width="10" height="10" viewBox="0 0 11 11"><path d="M0.500 0.500H10.500V10.500H0.500Z" fill="#f8f8f8" stroke="#777"/><path d="M3.500 10.500V3.500H10.500" fill="none" stroke="#333"/><path d="M1 10.500H10.500V1" stroke="#333" fill="none"/></svg>
<svg style="left:1240px;top:778.500px" width="10" height="11.500" viewBox="0 0 11 13"><path d="M1.500 3.500H9.500L8.500 12.500H2.500Z" fill="#f0f0f0" stroke="#333"/><path d="M0.500 3H10.500M3.500 1H7.500" stroke="#333" stroke-width="1.400"/><path d="M4 5.500V11M7 5.500V11" stroke="#666"/></svg>
</body>
</html>
